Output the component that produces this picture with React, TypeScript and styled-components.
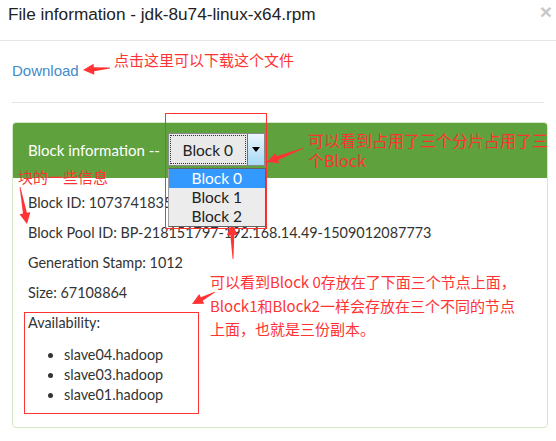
import React from 'react';
import styled, { createGlobalStyle } from 'styled-components';

const GlobalStyle = createGlobalStyle`
  html, body {
    margin: 0;
    padding: 0;
    background: #fff;
  }
`;

const Page = styled.div`
  position: relative;
  width: 556px;
  height: 441px;
  overflow: hidden;
  background: #fff;
  font-family: Lato, 'Open Sans', sans-serif;
  color: #333;
`;

const ModalHeader = styled.div`
  display: flex;
  align-items: flex-start;
  justify-content: space-between;
  height: 41px;
  padding: 3px 4px 0 8px;
  box-sizing: border-box;
  border-bottom: 1px solid #e5e5e5;
`;

const Title = styled.h4`
  margin: 0;
  font-family: 'Liberation Sans', Arial, sans-serif;
  font-weight: normal;
  font-size: 17.2px;
  line-height: 22px;
  color: #222;
`;

const Close = styled.span`
  font-family: 'Liberation Sans', Arial, sans-serif;
  font-size: 21px;
  font-weight: bold;
  line-height: 18px;
  color: #c8c8c8;
`;

const ModalBody = styled.div`
  padding: 0 8px 0 12px;
`;

const DownloadRow = styled.div`
  padding: 19px 0 0;
  height: 39px;
  box-sizing: border-box;
`;

const Link = styled.a`
  font-family: 'Liberation Sans', Arial, sans-serif;
  font-size: 15px;
  line-height: 20px;
  color: #428bca;
  text-decoration: none;
`;

const Rule = styled.hr`
  margin: 22px 4px 19px 0;
  border: 0;
  border-top: 1px solid #e5e5e5;
`;

const Panel = styled.div`
  border: 1px solid #d6e9c6;
  border-radius: 4px;
`;

const PanelHeading = styled.div`
  display: flex;
  align-items: center;
  gap: 8px;
  height: 55px;
  padding: 0 15px 2px;
  box-sizing: border-box;
  background: #5fa13c;
  border-radius: 3px 3px 0 0;
  color: #fff;
  font-size: 15px;
`;

const SelectBox = styled.div`
  position: relative;
  display: flex;
  width: 97px;
  height: 33px;
  box-sizing: border-box;
  border: 1px solid #8a8a8a;
  background: #e9e9e9;
  color: #222;
`;

const SelectValue = styled.div`
  flex: 1;
  display: flex;
  align-items: center;
  justify-content: center;
  margin: 1px;
  border: 1px dotted #333;
  font-size: 15.5px;
`;

const SelectButton = styled.div`
  width: 16px;
  display: flex;
  align-items: center;
  justify-content: center;
  border-left: 1px solid #3c7fb1;
  background: linear-gradient(#eaf6fd, #a7d9f5);
`;

const Caret = styled.span`
  width: 0;
  height: 0;
  border-left: 4px solid transparent;
  border-right: 4px solid transparent;
  border-top: 5px solid #000;
`;

const DropList = styled.ul`
  position: absolute;
  left: -1px;
  top: 34px;
  width: 98px;
  margin: 0;
  padding: 0;
  list-style: none;
  box-sizing: border-box;
  border: 1px solid #646464;
  border-left-color: #a0a0a0;
  background: #ececec;
  z-index: 2;
`;

const DropItem = styled.li<{ $active?: boolean }>`
  height: 19px;
  line-height: 19px;
  text-align: center;
  font-size: 15.5px;
  color: ${p => (p.$active ? '#fff' : '#222')};
  background: ${p => (p.$active ? '#3399ff' : 'transparent')};
`;

const PanelBody = styled.div`
  padding: 15px 15px 12px;
  font-size: 14.4px;
  line-height: 20px;
`;

const Para = styled.p<{ $gap?: number }>`
  margin: 0 0 ${p => p.$gap ?? 10}px;
`;

const NodeList = styled.ul`
  margin: 0 0 10px;
  padding-left: 36px;
  list-style: disc;
`;

const Overlay = styled.div`
  position: absolute;
  pointer-events: none;
`;

const Note = styled(Overlay)<{ $size?: number; $lh?: number }>`
  font-family: 'Noto Sans CJK SC', 'Noto Sans', sans-serif;
  font-size: ${p => p.$size ?? 15}px;
  line-height: ${p => p.$lh ?? 20}px;
  color: #ff3333;
  white-space: pre-wrap;
`;

const Frame = styled(Overlay)`
  border: 1px solid #ff3333;
  box-sizing: border-box;
`;

const ArrowLayer = styled.svg`
  position: absolute;
  left: 0;
  top: 0;
  pointer-events: none;
`;

type Pt = [number, number];

function arrowPoints(tail: Pt, tip: Pt): string {
  const dx = tip[0] - tail[0];
  const dy = tip[1] - tail[1];
  const len = Math.hypot(dx, dy);
  const ux = dx / len;
  const uy = dy / len;
  const nx = -uy;
  const ny = ux;
  const head = 11;
  const bx = tip[0] - ux * head;
  const by = tip[1] - uy * head;
  const p = (x: number, y: number, k: number) => `${x + nx * k},${y + ny * k}`;
  return [
    p(tail[0], tail[1], 0.4),
    p(bx, by, 2),
    p(bx, by, 5.5),
    `${tip[0]},${tip[1]}`,
    p(bx, by, -5.5),
    p(bx, by, -2),
    p(tail[0], tail[1], -0.4),
  ].join(' ');
}

const arrows: [Pt, Pt][] = [
  [[110, 68], [83, 70]],
  [[304, 148], [267, 162]],
  [[20, 187], [27, 224]],
  [[233, 259], [232, 224]],
  [[215, 292], [192, 304]],
];

export default function App() {
  return (
    <Page>
      <GlobalStyle />
      <ModalHeader>
        <Title>File information - jdk-8u74-linux-x64.rpm</Title>
        <Close>×</Close>
      </ModalHeader>
      <ModalBody>
        <DownloadRow>
          <Link href="#">Download</Link>
        </DownloadRow>
        <Rule />
        <Panel>
          <PanelHeading>
            <span>Block information --</span>
            <SelectBox>
              <SelectValue>Block 0</SelectValue>
              <SelectButton>
                <Caret />
              </SelectButton>
              <DropList>
                <DropItem $active>Block 0</DropItem>
                <DropItem>Block 1</DropItem>
                <DropItem>Block 2</DropItem>
              </DropList>
            </SelectBox>
          </PanelHeading>
          <PanelBody>
            <Para>Block ID: 1073741835</Para>
            <Para>Block Pool ID: BP-218151797-192.168.14.49-1509012087773</Para>
            <Para>Generation Stamp: 1012</Para>
            <Para>Size: 67108864</Para>
            <Para $gap={12}>Availability:</Para>
            <NodeList>
              <li>slave04.hadoop</li>
              <li>slave03.hadoop</li>
              <li>slave01.hadoop</li>
            </NodeList>
          </PanelBody>
        </Panel>
      </ModalBody>

      <Note style={{ left: 114, top: 50 }}>点击这里可以下载这个文件</Note>
      <Frame style={{ left: 165, top: 113, width: 102, height: 116 }} />
      <Note $size={16} style={{ left: 308, top: 130, width: 245 }}>
        可以看到占用了三个分片占用了三个Block
      </Note>
      <Note style={{ left: 18, top: 167 }}>块的一些信息</Note>
      <Frame style={{ left: 24, top: 312, width: 175, height: 102 }} />
      <Note $size={15} $lh={23.5} style={{ left: 210, top: 270, width: 330 }}>
        {'可以看到Block 0存放在了下面三个节点上面，\nBlock1和Block2一样会存放在三个不同的节点\n上面，也就是三份副本。'}
      </Note>
      <ArrowLayer width={556} height={441}>
        {arrows.map(([a, b], i) => (
          <polygon key={i} points={arrowPoints(a, b)} fill="#ff3333" />
        ))}
      </ArrowLayer>
    </Page>
  );
}
